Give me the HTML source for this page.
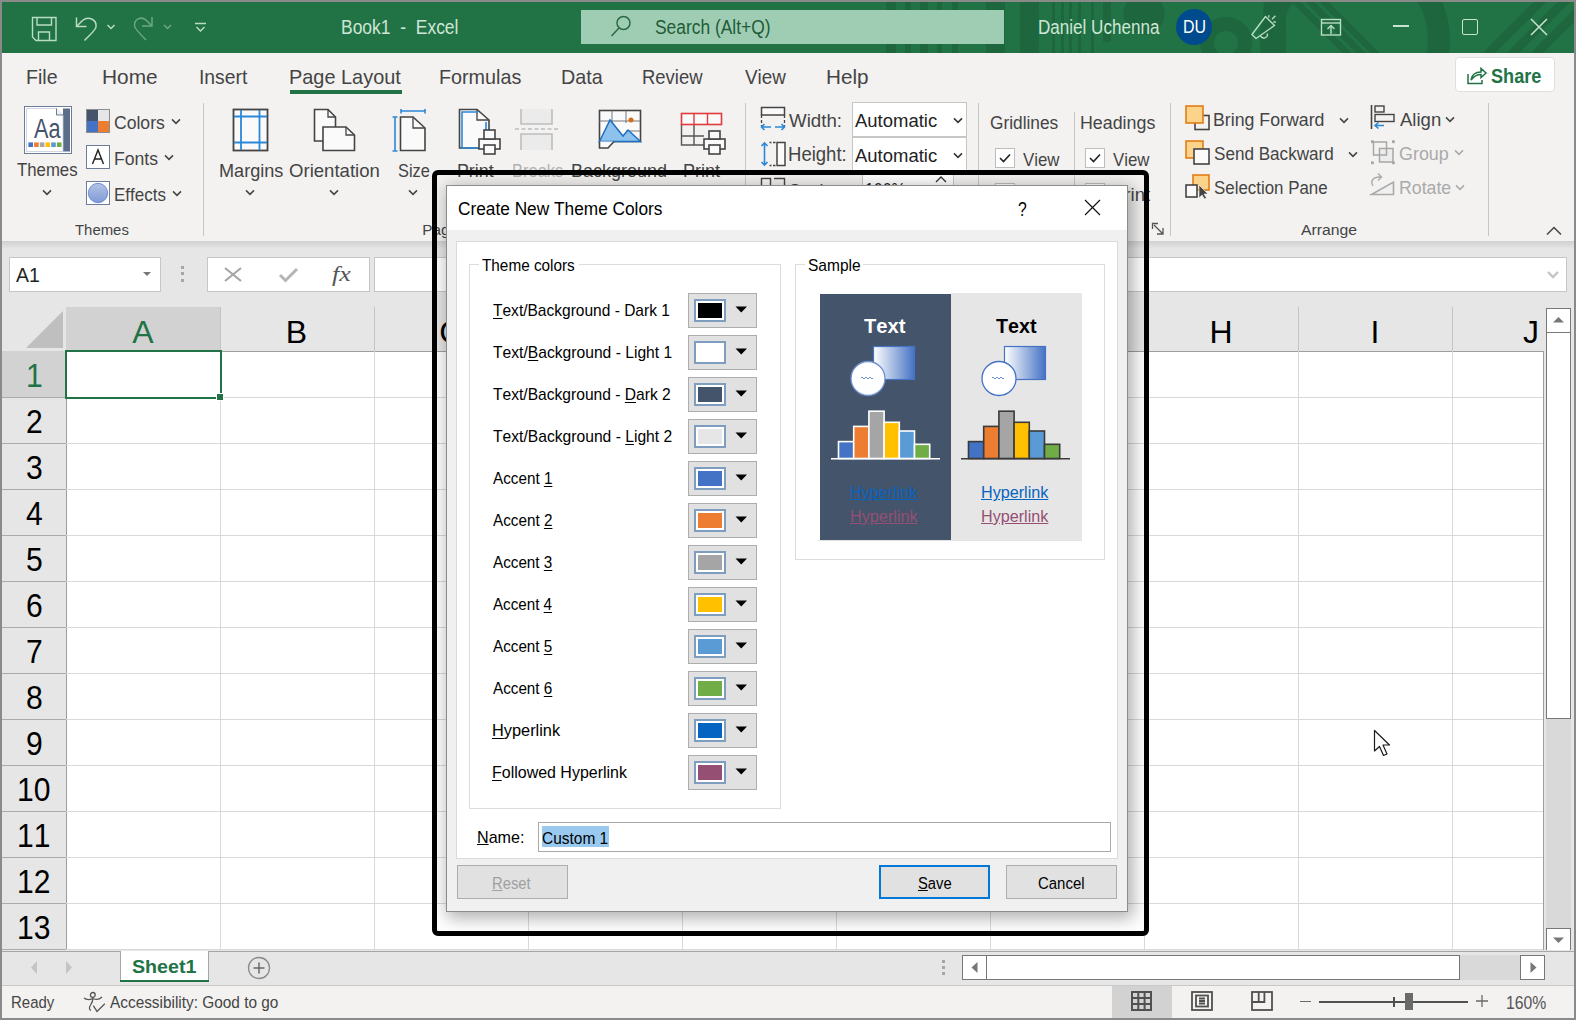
<!DOCTYPE html>
<html><head><meta charset="utf-8"><title>Excel</title>
<style>
html,body{margin:0;padding:0;width:1576px;height:1020px;overflow:hidden;}
body{position:relative;font-family:"Liberation Sans", sans-serif;font-kerning:none;}
.t{position:absolute;white-space:pre;font-kerning:none;}
svg{overflow:visible;}
</style></head><body>
<div style="position:absolute;left:0px;top:0px;width:1576px;height:1020px;background:#8a8a8a;"></div>
<div style="position:absolute;left:2px;top:2px;width:1572px;height:51px;background:#217346;"></div>
<svg style="position:absolute;left:2px;top:2px;" width="1572" height="51" viewBox="0 0 1572 51">
<defs><clipPath id="tbc"><rect x="0" y="0" width="1572" height="51"/></clipPath></defs>
<g clip-path="url(#tbc)">
<g fill="#1d663e">
<rect x="884" y="0" width="10" height="51"/><rect x="903" y="0" width="6" height="51"/><rect x="918" y="0" width="8" height="51"/>
<rect x="935" y="0" width="5" height="51"/><rect x="950" y="0" width="6" height="51"/><rect x="984" y="0" width="19" height="51"/>
<rect x="1018" y="0" width="19" height="51"/><rect x="1050" y="0" width="3" height="51"/><rect x="1059" y="0" width="3" height="51"/>
<rect x="1067" y="0" width="3" height="51"/><rect x="1076" y="0" width="3" height="51"/><rect x="1089" y="0" width="3" height="51"/>
<rect x="1101" y="0" width="8" height="40"/>
<circle cx="1142" cy="12" r="20.5"/>
</g>
<circle cx="1224" cy="41" r="19" fill="none" stroke="#1d663e" stroke-width="14"/>
<path d="M1262 0 H1284 V51 H1268 C1262 35 1260 15 1262 0 Z" fill="#1d663e"/>
<circle cx="1353" cy="38" r="84" fill="none" stroke="#1d663e" stroke-width="22"/>
<g stroke="#1d663e" stroke-width="9">
<line x1="1284" y1="-10" x2="1354" y2="60" stroke-width="6.5"/><line x1="1298" y1="-10" x2="1368" y2="60" stroke-width="6.5"/><line x1="1312" y1="-10" x2="1382" y2="60" stroke-width="6.5"/>
<line x1="1548" y1="-10" x2="1478" y2="60"/><line x1="1572" y1="-10" x2="1502" y2="60"/>
<line x1="1596" y1="-10" x2="1526" y2="60"/>
</g></g>
</svg>
<svg style="position:absolute;left:30px;top:15px;" width="30" height="30" viewBox="0 0 30 30"><g fill="none" stroke="#b9dcc4" stroke-width="1.4">
<path d="M2.5 2.5 H26 V25.5 H6 L2.5 22 Z"/><path d="M7 2.5 V10 H21.5 V2.5"/><path d="M8.5 25.5 V17 H19.5 V25.5"/></g></svg>
<svg style="position:absolute;left:72px;top:14px;" width="40" height="28" viewBox="0 0 40 28"><g fill="none" stroke="#b9dcc4" stroke-width="1.5">
<path d="M4.5 3.5 V12.5 H14.5"/><path d="M5 12 L10.5 6.5 C16 2 25 5 24 13 C23.5 16 20 19 12.5 26.5"/>
<path d="M35.5 11 L39 14.5 L42.5 11"/></g></svg>
<svg style="position:absolute;left:130px;top:14px;" width="40" height="28" viewBox="0 0 40 28"><g fill="none" stroke="#6ba983" stroke-width="1.5">
<path d="M22 3 V12 H12"/><path d="M21.5 11.5 L16 6 C11 2 4 5 4.5 12 C5 15 8 18 16 26"/>
<path d="M34 11 L37.5 14.5 L41 11"/></g></svg>
<svg style="position:absolute;left:194px;top:20px;" width="14" height="14" viewBox="0 0 14 14"><g fill="none" stroke="#b9dcc4" stroke-width="1.5"><path d="M1 3.5 H12"/><path d="M2.5 7 L6.5 11 L10.5 7"/></g></svg>
<div class="t" style="left:341.37px;top:16.87px;font-size:20.35px;line-height:20.35px;color:#cfe6d6;font-family:'Liberation Sans', sans-serif;transform:scaleX(0.8586);transform-origin:0 0;">Book1  -  Excel</div>
<div style="position:absolute;left:581px;top:10px;width:423px;height:34px;background:#9fcdb3;"></div>
<svg style="position:absolute;left:606px;top:14px;" width="30" height="26" viewBox="0 0 30 26"><g fill="none" stroke="#2a6a44" stroke-width="1.5"><circle cx="17.5" cy="9" r="6.5"/><path d="M13 14 L5.5 22"/></g></svg>
<div class="t" style="left:654.91px;top:17.54px;font-size:19.33px;line-height:19.33px;color:#1f5c38;font-family:'Liberation Sans', sans-serif;transform:scaleX(0.9002);transform-origin:0 0;">Search (Alt+Q)</div>
<div class="t" style="left:1037.60px;top:17.54px;font-size:19.33px;line-height:19.33px;color:#cfe6d6;font-family:'Liberation Sans', sans-serif;transform:scaleX(0.8825);transform-origin:0 0;">Daniel Uchenna</div>
<div style="position:absolute;left:1176px;top:9px;width:36px;height:36px;border-radius:50%;background:#004b8d"></div>
<div class="t" style="left:1182.69px;top:18.12px;font-size:18.17px;line-height:18.17px;color:#ffffff;font-family:'Liberation Sans', sans-serif;transform:scaleX(0.8780);transform-origin:0 0;">DU</div>
<svg style="position:absolute;left:1248px;top:12px;" width="34" height="30" viewBox="0 0 34 30"><g fill="none" stroke="#b9dcc4" stroke-width="1.4" stroke-linejoin="round">
<path d="M17.5 4.5 L26.5 13.5 L8 26.5 L4 22.5 Z"/><path d="M12.5 23.8 A3.6 3.6 0 0 0 19.3 21.5"/>
<path d="M20.8 3.3 V5.6"/><path d="M24 7.2 L27.4 3.8"/><path d="M25.3 10 H27.9"/></g></svg>
<svg style="position:absolute;left:1319px;top:17px;" width="26" height="22" viewBox="0 0 26 22"><g fill="none" stroke="#b9dcc4" stroke-width="1.4"><rect x="2.5" y="2.5" width="19" height="15.5"/><path d="M2.5 6 H21.5"/><path d="M12 17 V9 M8.5 12 L12 8.5 L15.5 12"/></g></svg>
<div style="position:absolute;left:1393px;top:25px;width:16px;height:1.5px;background:#c9e3d1;"></div>
<div style="position:absolute;left:1462px;top:19px;width:16px;height:16px;background:none;border:1.5px solid #c9e3d1;box-sizing:border-box;border-radius:2px;"></div>
<svg style="position:absolute;left:1529px;top:17px;" width="20" height="20" viewBox="0 0 20 20"><g stroke="#c9e3d1" stroke-width="1.5"><path d="M2 2 L18 18 M18 2 L2 18"/></g></svg>
<div style="position:absolute;left:2px;top:53px;width:1572px;height:188px;background:#f3f2f1;"></div>
<div class="t" style="left:26.29px;top:66.53px;font-size:20.64px;line-height:20.64px;color:#444444;font-family:'Liberation Sans', sans-serif;transform:scaleX(0.9495);transform-origin:0 0;">File</div>
<div class="t" style="left:102.29px;top:66.53px;font-size:20.64px;line-height:20.64px;color:#444444;font-family:'Liberation Sans', sans-serif;transform:scaleX(1.0106);transform-origin:0 0;">Home</div>
<div class="t" style="left:198.82px;top:66.53px;font-size:20.64px;line-height:20.64px;color:#444444;font-family:'Liberation Sans', sans-serif;transform:scaleX(0.9362);transform-origin:0 0;">Insert</div>
<div class="t" style="left:289.27px;top:66.53px;font-size:20.64px;line-height:20.64px;color:#444444;font-family:'Liberation Sans', sans-serif;transform:scaleX(0.9653);transform-origin:0 0;">Page Layout</div>
<div class="t" style="left:439.38px;top:66.53px;font-size:20.64px;line-height:20.64px;color:#444444;font-family:'Liberation Sans', sans-serif;transform:scaleX(0.9572);transform-origin:0 0;">Formulas</div>
<div class="t" style="left:560.88px;top:66.53px;font-size:20.64px;line-height:20.64px;color:#444444;font-family:'Liberation Sans', sans-serif;transform:scaleX(0.9570);transform-origin:0 0;">Data</div>
<div class="t" style="left:642.18px;top:66.53px;font-size:20.64px;line-height:20.64px;color:#444444;font-family:'Liberation Sans', sans-serif;transform:scaleX(0.8950);transform-origin:0 0;">Review</div>
<div class="t" style="left:744.92px;top:66.53px;font-size:20.64px;line-height:20.64px;color:#444444;font-family:'Liberation Sans', sans-serif;transform:scaleX(0.9128);transform-origin:0 0;">View</div>
<div class="t" style="left:826.30px;top:66.53px;font-size:20.64px;line-height:20.64px;color:#444444;font-family:'Liberation Sans', sans-serif;transform:scaleX(1.0028);transform-origin:0 0;">Help</div>
<div style="position:absolute;left:290px;top:90px;width:112px;height:4px;background:#217346;"></div>
<div style="position:absolute;left:1455px;top:57px;width:100px;height:35px;background:#ffffff;border:1px solid #e1dfdd;box-sizing:border-box;border-radius:4px;"></div>
<svg style="position:absolute;left:1464px;top:64px;" width="24" height="24" viewBox="0 0 24 24"><g fill="none" stroke="#217346" stroke-width="1.5"><path d="M4 10 V19.5 H18 V16"/><path d="M7 16 C8 10 12 8 17 8 V4.5 L22 9 L17 13.5 V10.5 C13 10.5 10 12 7 16 Z"/></g></svg>
<div class="t" style="left:1491.28px;top:67.39px;font-size:19.62px;line-height:19.62px;color:#217346;font-family:'Liberation Sans', sans-serif;font-weight:bold;transform:scaleX(0.9231);transform-origin:0 0;">Share</div>
<div style="position:absolute;left:2px;top:241px;width:1572px;height:8px;background:linear-gradient(#d0d0d0,#e6e6e6);"></div>
<div style="position:absolute;left:2px;top:249px;width:1572px;height:58px;background:#e6e6e6;"></div>
<div style="position:absolute;left:9px;top:257px;width:152px;height:35px;background:#ffffff;border:1px solid #c6c6c6;box-sizing:border-box;"></div>
<div class="t" style="left:16.16px;top:266.39px;font-size:19.62px;line-height:19.62px;color:#222222;font-family:'Liberation Sans', sans-serif;transform:scaleX(0.9911);transform-origin:0 0;">A1</div>
<svg style="position:absolute;left:140px;top:270px;" width="14" height="8" viewBox="0 0 14 8"><path d="M3 2 H11 L7 6 Z" fill="#777"/></svg>
<div style="position:absolute;left:181px;top:266px;width:3px;height:3px;background:#a6a6a6;"></div>
<div style="position:absolute;left:181px;top:272px;width:3px;height:3px;background:#a6a6a6;"></div>
<div style="position:absolute;left:181px;top:279px;width:3px;height:3px;background:#a6a6a6;"></div>
<div style="position:absolute;left:207px;top:257px;width:163px;height:35px;background:#ffffff;border:1px solid #c6c6c6;box-sizing:border-box;"></div>
<svg style="position:absolute;left:222px;top:265px;" width="24" height="20" viewBox="0 0 24 20"><g stroke="#a6a6a6" stroke-width="2.2"><path d="M3 3 L19 16 M19 3 L3 16"/></g></svg>
<svg style="position:absolute;left:276px;top:265px;" width="26" height="20" viewBox="0 0 26 20"><path d="M4 10 L9.5 15.5 L21 4" fill="none" stroke="#b5b5b5" stroke-width="3"/></svg>
<div class="t" style="left:332.11px;top:263.54px;font-size:21.80px;line-height:21.80px;color:#555555;font-family:'Liberation Serif', serif;font-style:italic;transform:scaleX(1.1872);transform-origin:0 0;font-style:italic;">fx</div>
<div style="position:absolute;left:374px;top:257px;width:1193px;height:35px;background:#ffffff;border:1px solid #c6c6c6;box-sizing:border-box;"></div>
<svg style="position:absolute;left:1546px;top:270px;" width="14" height="10" viewBox="0 0 14 10"><path d="M2 2 L7 7 L12 2" fill="none" stroke="#c4c4c4" stroke-width="2.4"/></svg>
<div style="position:absolute;left:2px;top:307px;width:1572px;height:644px;background:#e6e6e6;"></div>
<div style="position:absolute;left:67px;top:351px;width:1477px;height:600px;background:#ffffff;"></div>
<svg style="position:absolute;left:26px;top:311px;" width="38" height="38" viewBox="0 0 38 38"><path d="M37 0 V37 H0 Z" fill="#bfbfbf"/></svg>
<div style="position:absolute;left:66px;top:307px;width:154px;height:44px;background:#d2d2d2;"></div>
<div style="position:absolute;left:220px;top:307px;width:1px;height:44px;background:#c4c4c4;"></div>
<div style="position:absolute;left:374px;top:307px;width:1px;height:44px;background:#c4c4c4;"></div>
<div style="position:absolute;left:528px;top:307px;width:1px;height:44px;background:#c4c4c4;"></div>
<div style="position:absolute;left:682px;top:307px;width:1px;height:44px;background:#c4c4c4;"></div>
<div style="position:absolute;left:836px;top:307px;width:1px;height:44px;background:#c4c4c4;"></div>
<div style="position:absolute;left:990px;top:307px;width:1px;height:44px;background:#c4c4c4;"></div>
<div style="position:absolute;left:1144px;top:307px;width:1px;height:44px;background:#c4c4c4;"></div>
<div style="position:absolute;left:1298px;top:307px;width:1px;height:44px;background:#c4c4c4;"></div>
<div style="position:absolute;left:1452px;top:307px;width:1px;height:44px;background:#c4c4c4;"></div>
<div style="position:absolute;left:66px;top:351px;width:1478px;height:1px;background:#9e9e9e;"></div>
<div style="position:absolute;left:2px;top:351px;width:64px;height:47px;background:#d2d2d2;"></div>
<div style="position:absolute;left:66px;top:351px;width:1px;height:600px;background:#9e9e9e;"></div>
<div style="position:absolute;left:2px;top:397px;width:64px;height:1px;background:#ababab;"></div>
<div style="position:absolute;left:66px;top:397px;width:1478px;height:1px;background:#d9d9d9;"></div>
<div style="position:absolute;left:2px;top:443px;width:64px;height:1px;background:#ababab;"></div>
<div style="position:absolute;left:66px;top:443px;width:1478px;height:1px;background:#d9d9d9;"></div>
<div style="position:absolute;left:2px;top:489px;width:64px;height:1px;background:#ababab;"></div>
<div style="position:absolute;left:66px;top:489px;width:1478px;height:1px;background:#d9d9d9;"></div>
<div style="position:absolute;left:2px;top:535px;width:64px;height:1px;background:#ababab;"></div>
<div style="position:absolute;left:66px;top:535px;width:1478px;height:1px;background:#d9d9d9;"></div>
<div style="position:absolute;left:2px;top:581px;width:64px;height:1px;background:#ababab;"></div>
<div style="position:absolute;left:66px;top:581px;width:1478px;height:1px;background:#d9d9d9;"></div>
<div style="position:absolute;left:2px;top:627px;width:64px;height:1px;background:#ababab;"></div>
<div style="position:absolute;left:66px;top:627px;width:1478px;height:1px;background:#d9d9d9;"></div>
<div style="position:absolute;left:2px;top:673px;width:64px;height:1px;background:#ababab;"></div>
<div style="position:absolute;left:66px;top:673px;width:1478px;height:1px;background:#d9d9d9;"></div>
<div style="position:absolute;left:2px;top:719px;width:64px;height:1px;background:#ababab;"></div>
<div style="position:absolute;left:66px;top:719px;width:1478px;height:1px;background:#d9d9d9;"></div>
<div style="position:absolute;left:2px;top:765px;width:64px;height:1px;background:#ababab;"></div>
<div style="position:absolute;left:66px;top:765px;width:1478px;height:1px;background:#d9d9d9;"></div>
<div style="position:absolute;left:2px;top:811px;width:64px;height:1px;background:#ababab;"></div>
<div style="position:absolute;left:66px;top:811px;width:1478px;height:1px;background:#d9d9d9;"></div>
<div style="position:absolute;left:2px;top:857px;width:64px;height:1px;background:#ababab;"></div>
<div style="position:absolute;left:66px;top:857px;width:1478px;height:1px;background:#d9d9d9;"></div>
<div style="position:absolute;left:2px;top:903px;width:64px;height:1px;background:#ababab;"></div>
<div style="position:absolute;left:66px;top:903px;width:1478px;height:1px;background:#d9d9d9;"></div>
<div style="position:absolute;left:2px;top:949px;width:64px;height:1px;background:#ababab;"></div>
<div style="position:absolute;left:66px;top:949px;width:1478px;height:1px;background:#d9d9d9;"></div>
<div style="position:absolute;left:220px;top:351px;width:1px;height:600px;background:#d9d9d9;"></div>
<div style="position:absolute;left:374px;top:351px;width:1px;height:600px;background:#d9d9d9;"></div>
<div style="position:absolute;left:528px;top:351px;width:1px;height:600px;background:#d9d9d9;"></div>
<div style="position:absolute;left:682px;top:351px;width:1px;height:600px;background:#d9d9d9;"></div>
<div style="position:absolute;left:836px;top:351px;width:1px;height:600px;background:#d9d9d9;"></div>
<div style="position:absolute;left:990px;top:351px;width:1px;height:600px;background:#d9d9d9;"></div>
<div style="position:absolute;left:1144px;top:351px;width:1px;height:600px;background:#d9d9d9;"></div>
<div style="position:absolute;left:1298px;top:351px;width:1px;height:600px;background:#d9d9d9;"></div>
<div style="position:absolute;left:1452px;top:351px;width:1px;height:600px;background:#d9d9d9;"></div>
<div style="position:absolute;left:1543px;top:351px;width:1px;height:600px;background:#9e9e9e;"></div>
<div class="t" style="left:132.34px;top:316.43px;font-size:31.98px;line-height:31.98px;color:#217346;font-family:'Liberation Sans', sans-serif;">A</div>
<div class="t" style="left:285.87px;top:316.43px;font-size:31.98px;line-height:31.98px;color:#000000;font-family:'Liberation Sans', sans-serif;">B</div>
<div class="t" style="left:439.25px;top:316.43px;font-size:31.98px;line-height:31.98px;color:#000000;font-family:'Liberation Sans', sans-serif;">C</div>
<div class="t" style="left:592.91px;top:316.43px;font-size:31.98px;line-height:31.98px;color:#000000;font-family:'Liberation Sans', sans-serif;">D</div>
<div class="t" style="left:747.71px;top:316.43px;font-size:31.98px;line-height:31.98px;color:#000000;font-family:'Liberation Sans', sans-serif;">E</div>
<div class="t" style="left:902.56px;top:316.43px;font-size:31.98px;line-height:31.98px;color:#000000;font-family:'Liberation Sans', sans-serif;">F</div>
<div class="t" style="left:1054.95px;top:316.43px;font-size:31.98px;line-height:31.98px;color:#000000;font-family:'Liberation Sans', sans-serif;">G</div>
<div class="t" style="left:1209.45px;top:316.43px;font-size:31.98px;line-height:31.98px;color:#000000;font-family:'Liberation Sans', sans-serif;">H</div>
<div class="t" style="left:1370.56px;top:316.43px;font-size:31.98px;line-height:31.98px;color:#000000;font-family:'Liberation Sans', sans-serif;">I</div>
<div class="t" style="left:1522.90px;top:316.43px;font-size:31.98px;line-height:31.98px;color:#000000;font-family:'Liberation Sans', sans-serif;">J</div>
<div class="t" style="left:25.72px;top:360.32px;font-size:32.70px;line-height:32.70px;color:#217346;font-family:'Liberation Sans', sans-serif;transform:scaleX(0.9200);transform-origin:0 0;">1</div>
<div class="t" style="left:26.13px;top:406.32px;font-size:32.70px;line-height:32.70px;color:#000000;font-family:'Liberation Sans', sans-serif;transform:scaleX(0.9200);transform-origin:0 0;">2</div>
<div class="t" style="left:26.22px;top:452.32px;font-size:32.70px;line-height:32.70px;color:#000000;font-family:'Liberation Sans', sans-serif;transform:scaleX(0.9200);transform-origin:0 0;">3</div>
<div class="t" style="left:26.23px;top:498.32px;font-size:32.70px;line-height:32.70px;color:#000000;font-family:'Liberation Sans', sans-serif;transform:scaleX(0.9200);transform-origin:0 0;">4</div>
<div class="t" style="left:26.16px;top:544.32px;font-size:32.70px;line-height:32.70px;color:#000000;font-family:'Liberation Sans', sans-serif;transform:scaleX(0.9200);transform-origin:0 0;">5</div>
<div class="t" style="left:26.03px;top:590.32px;font-size:32.70px;line-height:32.70px;color:#000000;font-family:'Liberation Sans', sans-serif;transform:scaleX(0.9200);transform-origin:0 0;">6</div>
<div class="t" style="left:26.12px;top:636.32px;font-size:32.70px;line-height:32.70px;color:#000000;font-family:'Liberation Sans', sans-serif;transform:scaleX(0.9200);transform-origin:0 0;">7</div>
<div class="t" style="left:26.13px;top:682.32px;font-size:32.70px;line-height:32.70px;color:#000000;font-family:'Liberation Sans', sans-serif;transform:scaleX(0.9200);transform-origin:0 0;">8</div>
<div class="t" style="left:26.14px;top:728.32px;font-size:32.70px;line-height:32.70px;color:#000000;font-family:'Liberation Sans', sans-serif;transform:scaleX(0.9200);transform-origin:0 0;">9</div>
<div class="t" style="left:17.21px;top:774.32px;font-size:32.70px;line-height:32.70px;color:#000000;font-family:'Liberation Sans', sans-serif;transform:scaleX(0.9200);transform-origin:0 0;">10</div>
<div class="t" style="left:17.36px;top:820.32px;font-size:32.70px;line-height:32.70px;color:#000000;font-family:'Liberation Sans', sans-serif;transform:scaleX(0.9200);transform-origin:0 0;">11</div>
<div class="t" style="left:17.38px;top:866.32px;font-size:32.70px;line-height:32.70px;color:#000000;font-family:'Liberation Sans', sans-serif;transform:scaleX(0.9200);transform-origin:0 0;">12</div>
<div class="t" style="left:17.28px;top:912.32px;font-size:32.70px;line-height:32.70px;color:#000000;font-family:'Liberation Sans', sans-serif;transform:scaleX(0.9200);transform-origin:0 0;">13</div>
<div style="position:absolute;left:65px;top:350px;width:157px;height:49px;background:none;border:2px solid #217346;box-sizing:border-box;"></div>
<div style="position:absolute;left:216px;top:393px;width:8px;height:8px;background:#217346;border:1px solid #ffffff;box-sizing:border-box;"></div>
<div style="position:absolute;left:1546px;top:308px;width:25px;height:25px;background:#ffffff;border:1.5px solid #777777;box-sizing:border-box;"></div>
<svg style="position:absolute;left:1552px;top:316px;" width="13" height="8" viewBox="0 0 13 8"><path d="M1 6.5 L6.5 1 L12 6.5 Z" fill="#777"/></svg>
<div style="position:absolute;left:1546px;top:332px;width:25px;height:387px;background:#ffffff;border:1.5px solid #777777;box-sizing:border-box;"></div>
<div style="position:absolute;left:1546px;top:719px;width:25px;height:209px;background:#d9d9d9;"></div>
<div style="position:absolute;left:1546px;top:928px;width:25px;height:25px;background:#ffffff;border:1.5px solid #777777;box-sizing:border-box;"></div>
<svg style="position:absolute;left:1552px;top:936px;" width="13" height="8" viewBox="0 0 13 8"><path d="M1 1.5 L6.5 7 L12 1.5 Z" fill="#777"/></svg>
<div style="position:absolute;left:2px;top:950px;width:1572px;height:1px;background:#e6e6e6;"></div>
<div style="position:absolute;left:2px;top:951px;width:1572px;height:1px;background:#a6a6a6;"></div>
<div style="position:absolute;left:2px;top:952px;width:1572px;height:33px;background:#e6e6e6;"></div>
<svg style="position:absolute;left:26px;top:958px;" width="50" height="20" viewBox="0 0 50 20"><path d="M11 3 L5 9.5 L11 16 Z" fill="#c4c4c4"/><path d="M40 3 L46 9.5 L40 16 Z" fill="#c4c4c4"/></svg>
<div style="position:absolute;left:120px;top:951px;width:89px;height:31px;background:#ffffff;border:1px solid #a6a6a6;box-sizing:border-box;border-top:none;"></div>
<div style="position:absolute;left:120px;top:980px;width:89px;height:2px;background:#217346;"></div>
<div class="t" style="left:131.73px;top:958.15px;font-size:18.60px;line-height:18.60px;color:#217346;font-family:'Liberation Sans', sans-serif;font-weight:bold;transform:scaleX(1.0574);transform-origin:0 0;">Sheet1</div>
<svg style="position:absolute;left:247px;top:956px;" width="24" height="24" viewBox="0 0 24 24"><circle cx="12" cy="12" r="10.5" fill="none" stroke="#8a8a8a" stroke-width="1.3"/><path d="M12 6.5 V17.5 M6.5 12 H17.5" stroke="#6a6a6a" stroke-width="1.5"/></svg>
<div style="position:absolute;left:942px;top:960px;width:3px;height:3px;background:#a6a6a6;"></div>
<div style="position:absolute;left:942px;top:966px;width:3px;height:3px;background:#a6a6a6;"></div>
<div style="position:absolute;left:942px;top:972px;width:3px;height:3px;background:#a6a6a6;"></div>
<div style="position:absolute;left:962px;top:955px;width:25px;height:25px;background:#ffffff;border:1.5px solid #777777;box-sizing:border-box;"></div>
<svg style="position:absolute;left:968px;top:960px;" width="14" height="14" viewBox="0 0 14 14"><path d="M9.5 2 L3.5 7.5 L9.5 13 Z" fill="#777"/></svg>
<div style="position:absolute;left:986px;top:955px;width:474px;height:25px;background:#ffffff;border:1.5px solid #777777;box-sizing:border-box;"></div>
<div style="position:absolute;left:1460px;top:955px;width:60px;height:25px;background:#d9d9d9;"></div>
<div style="position:absolute;left:1520px;top:955px;width:25px;height:25px;background:#ffffff;border:1.5px solid #777777;box-sizing:border-box;"></div>
<svg style="position:absolute;left:1526px;top:960px;" width="14" height="14" viewBox="0 0 14 14"><path d="M4.5 2 L10.5 7.5 L4.5 13 Z" fill="#777"/></svg>
<div style="position:absolute;left:2px;top:985px;width:1572px;height:1px;background:#c8c8c8;"></div>
<div style="position:absolute;left:2px;top:986px;width:1572px;height:32px;background:#f3f2f1;"></div>
<div class="t" style="left:11.07px;top:995.33px;font-size:16.86px;line-height:16.86px;color:#444444;font-family:'Liberation Sans', sans-serif;transform:scaleX(0.8876);transform-origin:0 0;">Ready</div>
<svg style="position:absolute;left:82px;top:990px;" width="26" height="24" viewBox="0 0 26 24"><g fill="none" stroke="#555" stroke-width="1.3"><circle cx="10.8" cy="4.9" r="2.4"/><path d="M2 8 C5 10.5 8 9.8 10.8 8.5 C13.5 9.8 17 10 20 7"/><path d="M10.8 8.5 C11 12 9 14 8 16 C7 18 7.5 20 9 20.5"/><path d="M11.3 15.7 L15 21.4 L22.8 13.8"/></g></svg>
<div class="t" style="left:109.97px;top:995.33px;font-size:16.86px;line-height:16.86px;color:#444444;font-family:'Liberation Sans', sans-serif;transform:scaleX(0.9120);transform-origin:0 0;">Accessibility: Good to go</div>
<div style="position:absolute;left:1112px;top:986px;width:60px;height:32px;background:#d2d2d2;"></div>
<svg style="position:absolute;left:1130px;top:990px;" width="24" height="24" viewBox="0 0 24 24"><g fill="none" stroke="#505050" stroke-width="2"><rect x="2" y="2" width="19" height="18"/><path d="M8.3 2 V20 M14.6 2 V20 M2 8 H21 M2 14 H21"/></g></svg>
<svg style="position:absolute;left:1190px;top:990px;" width="24" height="24" viewBox="0 0 24 24"><g fill="none" stroke="#505050" stroke-width="1.8"><rect x="2" y="2" width="20" height="18"/><rect x="6" y="5.5" width="12" height="11"/><path d="M9 8.5 H15 M9 11 H15 M9 13.5 H15"/></g></svg>
<svg style="position:absolute;left:1250px;top:990px;" width="24" height="24" viewBox="0 0 24 24"><g fill="none" stroke="#505050" stroke-width="1.8"><rect x="2" y="2" width="20" height="18"/><path d="M2 12 H14.4 V2 M8.7 2 V12"/></g></svg>
<div style="position:absolute;left:1300px;top:1001px;width:11px;height:1.3px;background:#6a6a6a;"></div>
<div style="position:absolute;left:1319px;top:1001px;width:149px;height:2px;background:#505050;"></div>
<div style="position:absolute;left:1393px;top:997px;width:2px;height:10px;background:#505050;"></div>
<div style="position:absolute;left:1405px;top:993px;width:8px;height:17px;background:#6a6a6a;"></div>
<svg style="position:absolute;left:1474px;top:993px;" width="16" height="16" viewBox="0 0 16 16"><path d="M8 2 V14 M2 8 H14" stroke="#6a6a6a" stroke-width="1.3"/></svg>
<div class="t" style="left:1505.80px;top:994.99px;font-size:17.73px;line-height:17.73px;color:#555555;font-family:'Liberation Sans', sans-serif;transform:scaleX(0.8900);transform-origin:0 0;">160%</div>
<svg style="position:absolute;left:24px;top:106px;" width="49" height="49" viewBox="0 0 49 49">
<rect x="0.5" y="0.5" width="47" height="47" fill="#ffffff" stroke="#6d7c99" stroke-width="1"/>
<rect x="39" y="2.5" width="7" height="43" fill="#5c6d8a"/>
<path d="M2.5 2.5 H32.5 L39 9 V45.5 H2.5 Z" fill="#ffffff" stroke="#c5ccd8" stroke-width="0.8"/>
<path d="M32.5 2.5 V9 H39" fill="#eef0f4" stroke="#5c6d8a" stroke-width="0.9"/>
<rect x="4.4" y="36.4" width="4.6" height="4.6" fill="#4472c4"/><rect x="10.1" y="36.4" width="4.6" height="4.6" fill="#ed7d31"/>
<rect x="15.8" y="36.4" width="4.6" height="4.6" fill="#a5a5a5"/><rect x="21.5" y="36.4" width="4.6" height="4.6" fill="#ffc000"/>
<rect x="27.2" y="36.4" width="4.6" height="4.6" fill="#5b9bd5"/><rect x="32.9" y="36.4" width="4.6" height="4.6" fill="#70ad47"/>
</svg>
<div class="t" style="left:33.76px;top:115.12px;font-size:27.62px;line-height:27.62px;color:#44546a;font-family:'Liberation Sans', sans-serif;transform:scaleX(0.7858);transform-origin:0 0;">Aa</div>
<div class="t" style="left:17.02px;top:160.71px;font-size:18.90px;line-height:18.90px;color:#444444;font-family:'Liberation Sans', sans-serif;transform:scaleX(0.8876);transform-origin:0 0;">Themes</div>
<svg style="position:absolute;left:41.0px;top:186.0px;" width="12" height="12" viewBox="0 0 12 12"><path d="M2 4.4 L6.0 8.4 L10 4.4" fill="none" stroke="#444444" stroke-width="1.5"/></svg>
<svg style="position:absolute;left:86px;top:109px;" width="25" height="25" viewBox="0 0 25 25"><rect x="0.5" y="0.5" width="23" height="23" fill="none" stroke="#8d8d8d"/>
<rect x="1" y="1" width="11" height="11" fill="#44546a"/><rect x="12" y="1" width="11" height="11" fill="#e7e6e6"/>
<rect x="1" y="12" width="11" height="11" fill="#4472c4"/><rect x="12" y="12" width="11" height="11" fill="#ed7d31"/></svg>
<div class="t" style="left:113.81px;top:114.07px;font-size:18.46px;line-height:18.46px;color:#444444;font-family:'Liberation Sans', sans-serif;transform:scaleX(0.9529);transform-origin:0 0;">Colors</div>
<svg style="position:absolute;left:169.5px;top:115.0px;" width="12" height="12" viewBox="0 0 12 12"><path d="M2 4.4 L6.0 8.4 L10 4.4" fill="none" stroke="#444444" stroke-width="1.5"/></svg>
<svg style="position:absolute;left:86px;top:145px;" width="25" height="25" viewBox="0 0 25 25"><rect x="0.5" y="0.5" width="23" height="23" fill="#ffffff" stroke="#6d7c99"/>
<path d="M6.5 19 L12 5 L17.5 19 M8.5 14 H15.5" fill="none" stroke="#222" stroke-width="1.4"/></svg>
<div class="t" style="left:113.55px;top:150.07px;font-size:18.46px;line-height:18.46px;color:#444444;font-family:'Liberation Sans', sans-serif;transform:scaleX(0.9549);transform-origin:0 0;">Fonts</div>
<svg style="position:absolute;left:162.5px;top:151.0px;" width="12" height="12" viewBox="0 0 12 12"><path d="M2 4.4 L6.0 8.4 L10 4.4" fill="none" stroke="#444444" stroke-width="1.5"/></svg>
<svg style="position:absolute;left:86px;top:181px;" width="25" height="25" viewBox="0 0 25 25"><defs><linearGradient id="eg" x1="0" y1="0" x2="0" y2="1"><stop offset="0" stop-color="#b4c3e6"/><stop offset="1" stop-color="#7f9ad6"/></linearGradient></defs>
<rect x="0.5" y="0.5" width="23" height="23" fill="#ffffff" stroke="#6d7c99"/>
<circle cx="12" cy="12" r="9.7" fill="url(#eg)" stroke="#5b7cc9" stroke-width="0.8"/></svg>
<div class="t" style="left:113.60px;top:186.07px;font-size:18.46px;line-height:18.46px;color:#444444;font-family:'Liberation Sans', sans-serif;transform:scaleX(0.9218);transform-origin:0 0;">Effects</div>
<svg style="position:absolute;left:171.0px;top:187.0px;" width="12" height="12" viewBox="0 0 12 12"><path d="M2 4.4 L6.0 8.4 L10 4.4" fill="none" stroke="#444444" stroke-width="1.5"/></svg>
<div class="t" style="left:74.67px;top:221.88px;font-size:15.26px;line-height:15.26px;color:#444444;font-family:'Liberation Sans', sans-serif;transform:scaleX(0.9772);transform-origin:0 0;">Themes</div>
<div style="position:absolute;left:203px;top:103px;width:1px;height:133px;background:#c8c6c4;"></div>
<svg style="position:absolute;left:232px;top:108px;" width="38" height="45" viewBox="0 0 38 45"><rect x="1.5" y="1.5" width="34" height="41" fill="#fafafa" stroke="#444" stroke-width="1.8"/>
<path d="M9 2 V42 M27.5 2 V42 M2 8.5 H35 M2 34.5 H35" stroke="#2b88d8" stroke-width="1.8"/></svg>
<div class="t" style="left:218.51px;top:161.62px;font-size:18.17px;line-height:18.17px;color:#444444;font-family:'Liberation Sans', sans-serif;transform:scaleX(0.9972);transform-origin:0 0;">Margins</div>
<svg style="position:absolute;left:244.0px;top:186.0px;" width="12" height="12" viewBox="0 0 12 12"><path d="M2 4.4 L6.0 8.4 L10 4.4" fill="none" stroke="#444444" stroke-width="1.5"/></svg>
<svg style="position:absolute;left:313px;top:108px;" width="45" height="45" viewBox="0 0 45 45"><path d="M1.5 1.5 H15 L22.5 9 V33 H1.5 Z" fill="#fafafa" stroke="#444" stroke-width="1.6"/>
<path d="M15 1.5 V9 H22.5" fill="none" stroke="#444" stroke-width="1.3"/>
<path d="M10 19 H33 L41.5 27 V42.5 H10 Z" fill="#fafafa" stroke="#444" stroke-width="1.6"/>
<path d="M33 19 V27 H41.5" fill="none" stroke="#444" stroke-width="1.3"/></svg>
<div class="t" style="left:289.12px;top:161.62px;font-size:18.17px;line-height:18.17px;color:#444444;font-family:'Liberation Sans', sans-serif;transform:scaleX(1.0227);transform-origin:0 0;">Orientation</div>
<svg style="position:absolute;left:328.0px;top:186.0px;" width="12" height="12" viewBox="0 0 12 12"><path d="M2 4.4 L6.0 8.4 L10 4.4" fill="none" stroke="#444444" stroke-width="1.5"/></svg>
<svg style="position:absolute;left:392px;top:108px;" width="36" height="45" viewBox="0 0 36 45"><path d="M8.5 9 H21 L33 20 V42.5 H8.5 Z" fill="#fafafa" stroke="#444" stroke-width="1.6"/>
<path d="M21 9 V20 H33" fill="none" stroke="#444" stroke-width="1.3"/>
<path d="M3 9 V43 M0.5 9 H5.5 M0.5 43 H5.5 M9 3 H33 M9 1 V5.5 M33 1 V5.5" stroke="#2b88d8" stroke-width="1.6"/></svg>
<div class="t" style="left:397.86px;top:161.62px;font-size:18.17px;line-height:18.17px;color:#444444;font-family:'Liberation Sans', sans-serif;transform:scaleX(0.9018);transform-origin:0 0;">Size</div>
<svg style="position:absolute;left:407.0px;top:186.0px;" width="12" height="12" viewBox="0 0 12 12"><path d="M2 4.4 L6.0 8.4 L10 4.4" fill="none" stroke="#444444" stroke-width="1.5"/></svg>
<svg style="position:absolute;left:458px;top:108px;" width="44" height="48" viewBox="0 0 44 48"><path d="M1.5 1.5 H19 L31 12 V40 H1.5 Z" fill="#fafafa" stroke="#444" stroke-width="1.6"/>
<path d="M19 1.5 V12 H31" fill="none" stroke="#444" stroke-width="1.3"/>
<path d="M28 14 V40 H4 V4 H20" fill="none" stroke="#2b88d8" stroke-width="1.6"/>
<rect x="21" y="31" width="21" height="10" fill="#fafafa" stroke="#444" stroke-width="1.6"/>
<rect x="26" y="22" width="11" height="9" fill="#fafafa" stroke="#444" stroke-width="1.6"/>
<rect x="26" y="37" width="11" height="9" fill="#fafafa" stroke="#444" stroke-width="1.6"/></svg>
<div class="t" style="left:457.44px;top:161.62px;font-size:18.17px;line-height:18.17px;color:#444444;font-family:'Liberation Sans', sans-serif;transform:scaleX(0.9795);transform-origin:0 0;">Print</div>
<svg style="position:absolute;left:514px;top:108px;" width="46" height="44" viewBox="0 0 46 44"><path d="M7 1 V16 H38 V1" fill="#ebebeb" stroke="#bdbdbd" stroke-width="1.6"/>
<path d="M7 42 V26 H38 V42" fill="#ebebeb" stroke="#bdbdbd" stroke-width="1.6"/>
<path d="M1 21 H45" stroke="#bdbdbd" stroke-width="1.5" stroke-dasharray="4 2.5"/></svg>
<div class="t" style="left:511.65px;top:161.62px;font-size:18.17px;line-height:18.17px;color:#b1b1b1;font-family:'Liberation Sans', sans-serif;transform:scaleX(0.9081);transform-origin:0 0;">Breaks</div>
<svg style="position:absolute;left:598px;top:109px;" width="45" height="42" viewBox="0 0 45 42"><rect x="1.5" y="1.5" width="41" height="31" fill="#fafafa" stroke="#444" stroke-width="1.6"/>
<path d="M14 1.5 V20 M28 1.5 V14 M1.5 12 H42 M28 22 H42" stroke="#777" stroke-width="1"/>
<path d="M1.5 32.5 L12 11 L25 27 L30 21 L42.5 32.5 Z" fill="#8cc2ec" stroke="#1f6fc0" stroke-width="1.5"/>
<circle cx="33" cy="11" r="2.5" fill="#d86b14"/>
<path d="M1.5 32.5 V39 H10 L16 32.5" fill="#fafafa" stroke="#444" stroke-width="1.6"/></svg>
<div class="t" style="left:571.12px;top:161.62px;font-size:18.17px;line-height:18.17px;color:#444444;font-family:'Liberation Sans', sans-serif;transform:scaleX(0.9904);transform-origin:0 0;">Background</div>
<svg style="position:absolute;left:680px;top:112px;" width="48" height="44" viewBox="0 0 48 44"><path d="M1.5 12 V24 H24 M1.5 12 V33 H24 M14 12 V33" fill="none" stroke="#555" stroke-width="1.4"/>
<rect x="1.5" y="1.5" width="40" height="11" fill="#fafafa" stroke="#e0393e" stroke-width="1.6"/>
<path d="M14 1.5 V12 M27.5 1.5 V12" stroke="#e0393e" stroke-width="1.4"/>
<rect x="24" y="27" width="21" height="10" fill="#fafafa" stroke="#444" stroke-width="1.6"/>
<rect x="29" y="19" width="11" height="8" fill="#fafafa" stroke="#444" stroke-width="1.6"/>
<rect x="29" y="33" width="11" height="9" fill="#fafafa" stroke="#444" stroke-width="1.6"/></svg>
<div class="t" style="left:683.32px;top:161.62px;font-size:18.17px;line-height:18.17px;color:#444444;font-family:'Liberation Sans', sans-serif;transform:scaleX(0.9935);transform-origin:0 0;">Print</div>
<div style="position:absolute;left:745px;top:103px;width:1px;height:133px;background:#c8c6c4;"></div>
<svg style="position:absolute;left:760px;top:106px;" width="28" height="28" viewBox="0 0 28 28"><rect x="1.5" y="1.5" width="23" height="7.5" fill="#fafafa" stroke="#444" stroke-width="1.5"/>
<path d="M1.5 9 V20 M24.5 9 V20" stroke="#444" stroke-width="1.3" stroke-dasharray="3 2"/>
<path d="M2 21 H11 M4.5 18 L1.5 21 L4.5 24 M15 21 H24.5 M21.5 18 L24.5 21 L21.5 24" fill="none" stroke="#2b88d8" stroke-width="1.6"/></svg>
<div class="t" style="left:789.32px;top:110.96px;font-size:19.19px;line-height:19.19px;color:#444444;font-family:'Liberation Sans', sans-serif;transform:scaleX(0.9746);transform-origin:0 0;">Width:</div>
<div style="position:absolute;left:852px;top:102px;width:115px;height:35px;background:#ffffff;border:1px solid #c8c6c4;box-sizing:border-box;"></div>
<div class="t" style="left:855.26px;top:112.01px;font-size:18.90px;line-height:18.90px;color:#222222;font-family:'Liberation Sans', sans-serif;transform:scaleX(0.9787);transform-origin:0 0;">Automatic</div>
<svg style="position:absolute;left:952.0px;top:114.0px;" width="12" height="12" viewBox="0 0 12 12"><path d="M2 4.4 L6.0 8.4 L10 4.4" fill="none" stroke="#333" stroke-width="1.5"/></svg>
<svg style="position:absolute;left:760px;top:141px;" width="28" height="28" viewBox="0 0 28 28"><rect x="17" y="1.5" width="8" height="23" fill="#fafafa" stroke="#444" stroke-width="1.5"/>
<path d="M9.5 1.5 H11.5 M13 1.5 H15.5 M9.5 24.5 H11.5 M13 24.5 H15.5" stroke="#444" stroke-width="1.3"/>
<path d="M4.5 2 V24 M1.5 5 L4.5 2 L7.5 5 M1.5 21 L4.5 24 L7.5 21" fill="none" stroke="#2b88d8" stroke-width="1.6"/></svg>
<div class="t" style="left:788.48px;top:145.34px;font-size:19.91px;line-height:19.91px;color:#444444;font-family:'Liberation Sans', sans-serif;transform:scaleX(0.9306);transform-origin:0 0;">Height:</div>
<div style="position:absolute;left:852px;top:137px;width:115px;height:35px;background:#ffffff;border:1px solid #c8c6c4;box-sizing:border-box;"></div>
<div class="t" style="left:855.26px;top:147.01px;font-size:18.90px;line-height:18.90px;color:#222222;font-family:'Liberation Sans', sans-serif;transform:scaleX(0.9787);transform-origin:0 0;">Automatic</div>
<svg style="position:absolute;left:952.0px;top:149.0px;" width="12" height="12" viewBox="0 0 12 12"><path d="M2 4.4 L6.0 8.4 L10 4.4" fill="none" stroke="#333" stroke-width="1.5"/></svg>
<svg style="position:absolute;left:760px;top:177px;" width="28" height="28" viewBox="0 0 28 28"><rect x="1.5" y="1.5" width="9" height="20" fill="#fafafa" stroke="#444" stroke-width="1.4"/><path d="M14 1.5 H24.5 V21" fill="none" stroke="#444" stroke-width="1.4"/></svg>
<div class="t" style="left:788.60px;top:180.76px;font-size:19.19px;line-height:19.19px;color:#444444;font-family:'Liberation Sans', sans-serif;transform:scaleX(0.9191);transform-origin:0 0;">Scale:</div>
<div style="position:absolute;left:862px;top:172px;width:92px;height:35px;background:#ffffff;border:1px solid #c8c6c4;box-sizing:border-box;"></div>
<div class="t" style="left:864.79px;top:181.01px;font-size:18.90px;line-height:18.90px;color:#222222;font-family:'Liberation Sans', sans-serif;transform:scaleX(0.8439);transform-origin:0 0;">100%</div>
<svg style="position:absolute;left:934px;top:175px;" width="14" height="10" viewBox="0 0 14 10"><path d="M2 7 L7 2 L12 7" fill="none" stroke="#333" stroke-width="1.4"/></svg>
<div style="position:absolute;left:978px;top:103px;width:1px;height:133px;background:#c8c6c4;"></div>
<div class="t" style="left:990.43px;top:114.01px;font-size:18.90px;line-height:18.90px;color:#444444;font-family:'Liberation Sans', sans-serif;transform:scaleX(0.9146);transform-origin:0 0;">Gridlines</div>
<div class="t" style="left:1080.34px;top:114.01px;font-size:18.90px;line-height:18.90px;color:#444444;font-family:'Liberation Sans', sans-serif;transform:scaleX(0.9433);transform-origin:0 0;">Headings</div>
<div style="position:absolute;left:1074px;top:112px;width:1px;height:124px;background:#c8c6c4;"></div>
<div style="position:absolute;left:995px;top:148px;width:20px;height:20px;background:#ffffff;border:1.5px solid #bdbdbd;box-sizing:border-box;"></div>
<svg style="position:absolute;left:995px;top:148px;" width="20" height="20" viewBox="0 0 20 20"><path d="M5 10 L8.5 13.5 L15 6.5" fill="none" stroke="#222" stroke-width="1.6"/></svg>
<div class="t" style="left:1022.93px;top:150.52px;font-size:18.17px;line-height:18.17px;color:#444444;font-family:'Liberation Sans', sans-serif;transform:scaleX(0.9277);transform-origin:0 0;">View</div>
<div style="position:absolute;left:995px;top:183px;width:20px;height:20px;background:#ffffff;border:1.5px solid #bdbdbd;box-sizing:border-box;"></div>
<div class="t" style="left:1021.48px;top:185.52px;font-size:18.17px;line-height:18.17px;color:#444444;font-family:'Liberation Sans', sans-serif;transform:scaleX(1.0214);transform-origin:0 0;">Print</div>
<div style="position:absolute;left:1085px;top:148px;width:20px;height:20px;background:#ffffff;border:1.5px solid #bdbdbd;box-sizing:border-box;"></div>
<svg style="position:absolute;left:1085px;top:148px;" width="20" height="20" viewBox="0 0 20 20"><path d="M5 10 L8.5 13.5 L15 6.5" fill="none" stroke="#222" stroke-width="1.6"/></svg>
<div class="t" style="left:1113.33px;top:150.52px;font-size:18.17px;line-height:18.17px;color:#444444;font-family:'Liberation Sans', sans-serif;transform:scaleX(0.9277);transform-origin:0 0;">View</div>
<div style="position:absolute;left:1085px;top:183px;width:20px;height:20px;background:#ffffff;border:1.5px solid #bdbdbd;box-sizing:border-box;"></div>
<div class="t" style="left:1111.88px;top:185.52px;font-size:18.17px;line-height:18.17px;color:#444444;font-family:'Liberation Sans', sans-serif;transform:scaleX(1.0214);transform-origin:0 0;">Print</div>
<svg style="position:absolute;left:1150px;top:221px;" width="16" height="16" viewBox="0 0 16 16"><path d="M2.5 8 V2.5 H8 M4 4 L13 13 M13 7 V13 H7" fill="none" stroke="#555" stroke-width="1.3"/></svg>
<div style="position:absolute;left:1170px;top:103px;width:1px;height:133px;background:#c8c6c4;"></div>
<svg style="position:absolute;left:1184px;top:104px;" width="30" height="30" viewBox="0 0 30 30"><rect x="11" y="11.5" width="14" height="14" fill="none" stroke="#444" stroke-width="1.6"/>
<rect x="2" y="2" width="17" height="17" fill="#fbd38b" stroke="#e17d13" stroke-width="1.6"/></svg>
<div class="t" style="left:1213.44px;top:111.03px;font-size:18.75px;line-height:18.75px;color:#444444;font-family:'Liberation Sans', sans-serif;transform:scaleX(0.9461);transform-origin:0 0;">Bring Forward</div>
<svg style="position:absolute;left:1338.0px;top:113.5px;" width="12" height="12" viewBox="0 0 12 12"><path d="M2 4.4 L6.0 8.4 L10 4.4" fill="none" stroke="#444444" stroke-width="1.5"/></svg>
<svg style="position:absolute;left:1184px;top:139px;" width="30" height="30" viewBox="0 0 30 30"><rect x="2" y="2" width="17" height="17" fill="#fbd38b" stroke="#e17d13" stroke-width="1.6"/>
<rect x="10" y="10" width="15" height="15" fill="#fafafa" stroke="#444" stroke-width="1.6"/></svg>
<div class="t" style="left:1214.12px;top:144.83px;font-size:18.75px;line-height:18.75px;color:#444444;font-family:'Liberation Sans', sans-serif;transform:scaleX(0.9121);transform-origin:0 0;">Send Backward</div>
<svg style="position:absolute;left:1347.0px;top:147.5px;" width="12" height="12" viewBox="0 0 12 12"><path d="M2 4.4 L6.0 8.4 L10 4.4" fill="none" stroke="#444444" stroke-width="1.5"/></svg>
<svg style="position:absolute;left:1184px;top:173px;" width="30" height="30" viewBox="0 0 30 30"><rect x="9" y="2" width="16" height="15" fill="#fbd38b" stroke="#e17d13" stroke-width="1.6"/>
<rect x="2" y="12" width="11" height="12" fill="#fafafa" stroke="#444" stroke-width="1.6"/>
<path d="M15 12 V25 L18 22 L20.5 26 L22.5 25 L20 21 H24 Z" fill="#444" stroke="#fafafa" stroke-width="0.6"/></svg>
<div class="t" style="left:1214.13px;top:178.93px;font-size:18.75px;line-height:18.75px;color:#444444;font-family:'Liberation Sans', sans-serif;transform:scaleX(0.9008);transform-origin:0 0;">Selection Pane</div>
<div class="t" style="left:1300.57px;top:221.68px;font-size:15.26px;line-height:15.26px;color:#444444;font-family:'Liberation Sans', sans-serif;transform:scaleX(1.0338);transform-origin:0 0;">Arrange</div>
<svg style="position:absolute;left:1370px;top:104px;" width="28" height="28" viewBox="0 0 28 28"><path d="M1.5 1 V25" stroke="#444" stroke-width="1.6"/>
<rect x="5" y="2" width="9" height="6" fill="none" stroke="#444" stroke-width="1.4"/>
<rect x="5" y="10.5" width="19" height="7" fill="none" stroke="#444" stroke-width="1.4"/>
<path d="M5 21.5 H14 M8.5 18.5 L5 21.5 L8.5 24.5" fill="none" stroke="#2b88d8" stroke-width="1.6"/></svg>
<div class="t" style="left:1399.66px;top:111.17px;font-size:18.46px;line-height:18.46px;color:#444444;font-family:'Liberation Sans', sans-serif;transform:scaleX(1.0047);transform-origin:0 0;">Align</div>
<svg style="position:absolute;left:1444.0px;top:113.0px;" width="12" height="12" viewBox="0 0 12 12"><path d="M2 4.4 L6.0 8.4 L10 4.4" fill="none" stroke="#444444" stroke-width="1.5"/></svg>
<svg style="position:absolute;left:1370px;top:139px;" width="28" height="28" viewBox="0 0 28 28"><g fill="#a6a6a6"><rect x="1" y="1.3" width="2.8" height="2.8"/><rect x="22" y="1.3" width="2.8" height="2.8"/><rect x="1" y="22.4" width="2.8" height="2.8"/><rect x="22" y="22.4" width="2.8" height="2.8"/></g>
<rect x="9.5" y="9.5" width="13.5" height="13.5" fill="#ececec" stroke="#a6a6a6" stroke-width="1.5"/>
<rect x="3.5" y="3" width="13" height="13" fill="none" stroke="#a6a6a6" stroke-width="1.5"/></svg>
<div class="t" style="left:1398.80px;top:145.07px;font-size:18.46px;line-height:18.46px;color:#aaaaaa;font-family:'Liberation Sans', sans-serif;transform:scaleX(0.9718);transform-origin:0 0;">Group</div>
<svg style="position:absolute;left:1453.0px;top:146.0px;" width="12" height="12" viewBox="0 0 12 12"><path d="M2 4.4 L6.0 8.4 L10 4.4" fill="none" stroke="#aaa" stroke-width="1.5"/></svg>
<svg style="position:absolute;left:1370px;top:173px;" width="28" height="24" viewBox="0 0 28 24"><path d="M1.5 21.5 L23.5 9 V21.5 Z" fill="#f0f0f0" stroke="#aaa" stroke-width="1.6"/>
<path d="M3 13 C0 8 3 3.5 11 4 M8 0.5 L11.5 4 L8 7.5" fill="none" stroke="#aaa" stroke-width="1.4"/></svg>
<div class="t" style="left:1398.55px;top:179.07px;font-size:18.46px;line-height:18.46px;color:#aaaaaa;font-family:'Liberation Sans', sans-serif;transform:scaleX(0.9606);transform-origin:0 0;">Rotate</div>
<svg style="position:absolute;left:1454.0px;top:181.0px;" width="12" height="12" viewBox="0 0 12 12"><path d="M2 4.4 L6.0 8.4 L10 4.4" fill="none" stroke="#aaa" stroke-width="1.5"/></svg>
<div style="position:absolute;left:1488px;top:103px;width:1px;height:133px;background:#c8c6c4;"></div>
<svg style="position:absolute;left:1545px;top:225px;" width="18" height="12" viewBox="0 0 18 12"><path d="M2 9.5 L9 2.5 L16 9.5" fill="none" stroke="#444" stroke-width="1.5"/></svg>
<div class="t" style="left:422.35px;top:221.88px;font-size:15.26px;line-height:15.26px;color:#444444;font-family:'Liberation Sans', sans-serif;">Page Setup</div>
<div style="position:absolute;left:437px;top:175px;width:707px;height:756px;overflow:hidden;"><div style="position:absolute;left:9px;top:10px;width:682px;height:727px;box-shadow:3px 4px 16px 2px rgba(0,0,0,0.32);"></div></div>
<div style="position:absolute;left:446px;top:185px;width:682px;height:727px;background:#f0f0f0;border:1px solid #8c8c8c;box-sizing:border-box;"></div>
<div style="position:absolute;left:447px;top:186px;width:680px;height:44px;background:#ffffff;"></div>
<div class="t" style="left:457.52px;top:200.01px;font-size:18.90px;line-height:18.90px;color:#000000;font-family:'Liberation Sans', sans-serif;transform:scaleX(0.9143);transform-origin:0 0;">Create New Theme Colors</div>
<div class="t" style="left:1017.86px;top:197.96px;font-size:21.08px;line-height:21.08px;color:#000000;font-family:'Liberation Sans', sans-serif;transform:scaleX(0.7444);transform-origin:0 0;">?</div>
<svg style="position:absolute;left:1084px;top:199px;" width="18" height="18" viewBox="0 0 18 18"><path d="M1 1 L16 16 M16 1 L1 16" stroke="#111" stroke-width="1.2"/></svg>
<div style="position:absolute;left:456px;top:241px;width:662px;height:618px;background:#ffffff;border:1px solid #dadada;box-sizing:border-box;"></div>
<div style="position:absolute;left:469px;top:264px;width:312px;height:545px;background:none;border:1px solid #dcdcdc;box-sizing:border-box;"></div>
<div style="position:absolute;left:479px;top:258px;width:100px;height:12px;background:#ffffff;"></div>
<div class="t" style="left:482.26px;top:257.97px;font-size:16.57px;line-height:16.57px;color:#000000;font-family:'Liberation Sans', sans-serif;transform:scaleX(0.9245);transform-origin:0 0;">Theme colors</div>
<div style="position:absolute;left:795px;top:264px;width:310px;height:296px;background:none;border:1px solid #dcdcdc;box-sizing:border-box;"></div>
<div style="position:absolute;left:805px;top:258px;width:58px;height:12px;background:#ffffff;"></div>
<div class="t" style="left:807.70px;top:257.97px;font-size:16.57px;line-height:16.57px;color:#000000;font-family:'Liberation Sans', sans-serif;transform:scaleX(0.9361);transform-origin:0 0;">Sample</div>
<div class="t" style="left:492.75px;top:303.47px;font-size:16.57px;line-height:16.57px;color:#000000;font-family:'Liberation Sans', sans-serif;transform:scaleX(0.9371);transform-origin:0 0;text-underline-offset:2px;"><u>T</u>ext/Background - Dark 1</div>
<div style="position:absolute;left:688px;top:293px;width:69px;height:35px;background:#e1e1e1;border:1px solid #adadad;box-sizing:border-box;"></div>
<div style="position:absolute;left:694px;top:299px;width:32px;height:23px;background:#ffffff;border:2px solid #7f9dbf;box-sizing:border-box;"></div>
<div style="position:absolute;left:698px;top:303px;width:24px;height:15px;background:#000000;"></div>
<svg style="position:absolute;left:735px;top:306px;" width="13" height="8" viewBox="0 0 13 8"><path d="M0.5 0.5 H12 L6.25 6.5 Z" fill="#000"/></svg>
<div class="t" style="left:492.75px;top:345.47px;font-size:16.57px;line-height:16.57px;color:#000000;font-family:'Liberation Sans', sans-serif;transform:scaleX(0.9446);transform-origin:0 0;text-underline-offset:2px;">Text/<u>B</u>ackground - Light 1</div>
<div style="position:absolute;left:688px;top:335px;width:69px;height:35px;background:#e1e1e1;border:1px solid #adadad;box-sizing:border-box;"></div>
<div style="position:absolute;left:694px;top:341px;width:32px;height:23px;background:#ffffff;border:2px solid #7f9dbf;box-sizing:border-box;"></div>
<div style="position:absolute;left:698px;top:345px;width:24px;height:15px;background:#ffffff;"></div>
<svg style="position:absolute;left:735px;top:348px;" width="13" height="8" viewBox="0 0 13 8"><path d="M0.5 0.5 H12 L6.25 6.5 Z" fill="#000"/></svg>
<div class="t" style="left:492.75px;top:387.47px;font-size:16.57px;line-height:16.57px;color:#000000;font-family:'Liberation Sans', sans-serif;transform:scaleX(0.9420);transform-origin:0 0;text-underline-offset:2px;">Text/Background - <u>D</u>ark 2</div>
<div style="position:absolute;left:688px;top:377px;width:69px;height:35px;background:#e1e1e1;border:1px solid #adadad;box-sizing:border-box;"></div>
<div style="position:absolute;left:694px;top:383px;width:32px;height:23px;background:#ffffff;border:2px solid #7f9dbf;box-sizing:border-box;"></div>
<div style="position:absolute;left:698px;top:387px;width:24px;height:15px;background:#44546a;"></div>
<svg style="position:absolute;left:735px;top:390px;" width="13" height="8" viewBox="0 0 13 8"><path d="M0.5 0.5 H12 L6.25 6.5 Z" fill="#000"/></svg>
<div class="t" style="left:492.75px;top:429.47px;font-size:16.57px;line-height:16.57px;color:#000000;font-family:'Liberation Sans', sans-serif;transform:scaleX(0.9447);transform-origin:0 0;text-underline-offset:2px;">Text/Background - <u>L</u>ight 2</div>
<div style="position:absolute;left:688px;top:419px;width:69px;height:35px;background:#e1e1e1;border:1px solid #adadad;box-sizing:border-box;"></div>
<div style="position:absolute;left:694px;top:425px;width:32px;height:23px;background:#ffffff;border:2px solid #7f9dbf;box-sizing:border-box;"></div>
<div style="position:absolute;left:698px;top:429px;width:24px;height:15px;background:#e7e6e6;"></div>
<svg style="position:absolute;left:735px;top:432px;" width="13" height="8" viewBox="0 0 13 8"><path d="M0.5 0.5 H12 L6.25 6.5 Z" fill="#000"/></svg>
<div class="t" style="left:493.07px;top:471.47px;font-size:16.57px;line-height:16.57px;color:#000000;font-family:'Liberation Sans', sans-serif;transform:scaleX(0.9209);transform-origin:0 0;text-underline-offset:2px;">Accent <u>1</u></div>
<div style="position:absolute;left:688px;top:461px;width:69px;height:35px;background:#e1e1e1;border:1px solid #adadad;box-sizing:border-box;"></div>
<div style="position:absolute;left:694px;top:467px;width:32px;height:23px;background:#ffffff;border:2px solid #7f9dbf;box-sizing:border-box;"></div>
<div style="position:absolute;left:698px;top:471px;width:24px;height:15px;background:#4472c4;"></div>
<svg style="position:absolute;left:735px;top:474px;" width="13" height="8" viewBox="0 0 13 8"><path d="M0.5 0.5 H12 L6.25 6.5 Z" fill="#000"/></svg>
<div class="t" style="left:493.07px;top:513.47px;font-size:16.57px;line-height:16.57px;color:#000000;font-family:'Liberation Sans', sans-serif;transform:scaleX(0.9213);transform-origin:0 0;text-underline-offset:2px;">Accent <u>2</u></div>
<div style="position:absolute;left:688px;top:503px;width:69px;height:35px;background:#e1e1e1;border:1px solid #adadad;box-sizing:border-box;"></div>
<div style="position:absolute;left:694px;top:509px;width:32px;height:23px;background:#ffffff;border:2px solid #7f9dbf;box-sizing:border-box;"></div>
<div style="position:absolute;left:698px;top:513px;width:24px;height:15px;background:#ed7d31;"></div>
<svg style="position:absolute;left:735px;top:516px;" width="13" height="8" viewBox="0 0 13 8"><path d="M0.5 0.5 H12 L6.25 6.5 Z" fill="#000"/></svg>
<div class="t" style="left:493.07px;top:555.47px;font-size:16.57px;line-height:16.57px;color:#000000;font-family:'Liberation Sans', sans-serif;transform:scaleX(0.9197);transform-origin:0 0;text-underline-offset:2px;">Accent <u>3</u></div>
<div style="position:absolute;left:688px;top:545px;width:69px;height:35px;background:#e1e1e1;border:1px solid #adadad;box-sizing:border-box;"></div>
<div style="position:absolute;left:694px;top:551px;width:32px;height:23px;background:#ffffff;border:2px solid #7f9dbf;box-sizing:border-box;"></div>
<div style="position:absolute;left:698px;top:555px;width:24px;height:15px;background:#a5a5a5;"></div>
<svg style="position:absolute;left:735px;top:558px;" width="13" height="8" viewBox="0 0 13 8"><path d="M0.5 0.5 H12 L6.25 6.5 Z" fill="#000"/></svg>
<div class="t" style="left:493.07px;top:597.47px;font-size:16.57px;line-height:16.57px;color:#000000;font-family:'Liberation Sans', sans-serif;transform:scaleX(0.9162);transform-origin:0 0;text-underline-offset:2px;">Accent <u>4</u></div>
<div style="position:absolute;left:688px;top:587px;width:69px;height:35px;background:#e1e1e1;border:1px solid #adadad;box-sizing:border-box;"></div>
<div style="position:absolute;left:694px;top:593px;width:32px;height:23px;background:#ffffff;border:2px solid #7f9dbf;box-sizing:border-box;"></div>
<div style="position:absolute;left:698px;top:597px;width:24px;height:15px;background:#ffc000;"></div>
<svg style="position:absolute;left:735px;top:600px;" width="13" height="8" viewBox="0 0 13 8"><path d="M0.5 0.5 H12 L6.25 6.5 Z" fill="#000"/></svg>
<div class="t" style="left:493.07px;top:639.47px;font-size:16.57px;line-height:16.57px;color:#000000;font-family:'Liberation Sans', sans-serif;transform:scaleX(0.9193);transform-origin:0 0;text-underline-offset:2px;">Accent <u>5</u></div>
<div style="position:absolute;left:688px;top:629px;width:69px;height:35px;background:#e1e1e1;border:1px solid #adadad;box-sizing:border-box;"></div>
<div style="position:absolute;left:694px;top:635px;width:32px;height:23px;background:#ffffff;border:2px solid #7f9dbf;box-sizing:border-box;"></div>
<div style="position:absolute;left:698px;top:639px;width:24px;height:15px;background:#5b9bd5;"></div>
<svg style="position:absolute;left:735px;top:642px;" width="13" height="8" viewBox="0 0 13 8"><path d="M0.5 0.5 H12 L6.25 6.5 Z" fill="#000"/></svg>
<div class="t" style="left:493.07px;top:681.47px;font-size:16.57px;line-height:16.57px;color:#000000;font-family:'Liberation Sans', sans-serif;transform:scaleX(0.9197);transform-origin:0 0;text-underline-offset:2px;">Accent <u>6</u></div>
<div style="position:absolute;left:688px;top:671px;width:69px;height:35px;background:#e1e1e1;border:1px solid #adadad;box-sizing:border-box;"></div>
<div style="position:absolute;left:694px;top:677px;width:32px;height:23px;background:#ffffff;border:2px solid #7f9dbf;box-sizing:border-box;"></div>
<div style="position:absolute;left:698px;top:681px;width:24px;height:15px;background:#70ad47;"></div>
<svg style="position:absolute;left:735px;top:684px;" width="13" height="8" viewBox="0 0 13 8"><path d="M0.5 0.5 H12 L6.25 6.5 Z" fill="#000"/></svg>
<div class="t" style="left:491.76px;top:723.47px;font-size:16.57px;line-height:16.57px;color:#000000;font-family:'Liberation Sans', sans-serif;transform:scaleX(0.9863);transform-origin:0 0;text-underline-offset:2px;"><u>H</u>yperlink</div>
<div style="position:absolute;left:688px;top:713px;width:69px;height:35px;background:#e1e1e1;border:1px solid #adadad;box-sizing:border-box;"></div>
<div style="position:absolute;left:694px;top:719px;width:32px;height:23px;background:#ffffff;border:2px solid #7f9dbf;box-sizing:border-box;"></div>
<div style="position:absolute;left:698px;top:723px;width:24px;height:15px;background:#0563c1;"></div>
<svg style="position:absolute;left:735px;top:726px;" width="13" height="8" viewBox="0 0 13 8"><path d="M0.5 0.5 H12 L6.25 6.5 Z" fill="#000"/></svg>
<div class="t" style="left:491.79px;top:765.47px;font-size:16.57px;line-height:16.57px;color:#000000;font-family:'Liberation Sans', sans-serif;transform:scaleX(0.9644);transform-origin:0 0;text-underline-offset:2px;"><u>F</u>ollowed Hyperlink</div>
<div style="position:absolute;left:688px;top:755px;width:69px;height:35px;background:#e1e1e1;border:1px solid #adadad;box-sizing:border-box;"></div>
<div style="position:absolute;left:694px;top:761px;width:32px;height:23px;background:#ffffff;border:2px solid #7f9dbf;box-sizing:border-box;"></div>
<div style="position:absolute;left:698px;top:765px;width:24px;height:15px;background:#954f72;"></div>
<svg style="position:absolute;left:735px;top:768px;" width="13" height="8" viewBox="0 0 13 8"><path d="M0.5 0.5 H12 L6.25 6.5 Z" fill="#000"/></svg>
<div class="t" style="left:476.98px;top:830.37px;font-size:15.99px;line-height:15.99px;color:#000000;font-family:'Liberation Sans', sans-serif;transform:scaleX(1.0086);transform-origin:0 0;"><u>N</u>ame:</div>
<div style="position:absolute;left:538px;top:822px;width:573px;height:30px;background:#ffffff;border:1px solid #a9a9a9;box-sizing:border-box;"></div>
<div style="position:absolute;left:542px;top:826px;width:67px;height:21px;background:#99c9ef;"></div>
<div class="t" style="left:542.01px;top:830.12px;font-size:16.28px;line-height:16.28px;color:#000000;font-family:'Liberation Sans', sans-serif;transform:scaleX(0.9509);transform-origin:0 0;">Custom 1</div>
<div style="position:absolute;left:457px;top:865px;width:111px;height:34px;background:#e1e1e1;border:1px solid #adadad;box-sizing:border-box;"></div>
<div class="t" style="left:492.49px;top:875.30px;font-size:16.42px;line-height:16.42px;color:#a0a0a0;font-family:'Liberation Sans', sans-serif;transform:scaleX(0.9001);transform-origin:0 0;"><u>R</u>eset</div>
<div style="position:absolute;left:879px;top:865px;width:111px;height:34px;background:#e1e1e1;border:2px solid #0078d7;box-sizing:border-box;"></div>
<div class="t" style="left:917.83px;top:875.30px;font-size:16.42px;line-height:16.42px;color:#000000;font-family:'Liberation Sans', sans-serif;transform:scaleX(0.8982);transform-origin:0 0;"><u>S</u>ave</div>
<div style="position:absolute;left:1006px;top:865px;width:111px;height:34px;background:#e1e1e1;border:1px solid #adadad;box-sizing:border-box;"></div>
<div class="t" style="left:1037.84px;top:875.30px;font-size:16.42px;line-height:16.42px;color:#000000;font-family:'Liberation Sans', sans-serif;transform:scaleX(0.9107);transform-origin:0 0;">Cancel</div>
<div style="position:absolute;left:820px;top:294px;width:131px;height:246px;background:#44546a;"></div>
<div style="position:absolute;left:951px;top:293px;width:131px;height:247px;background:#e7e6e6;"></div>
<div style="position:absolute;left:818px;top:540px;width:264px;height:1px;background:#e2e2e2;"></div>
<div class="t" style="left:863.77px;top:315.77px;font-size:20.35px;line-height:20.35px;color:#ffffff;font-family:'Liberation Sans', sans-serif;font-weight:bold;transform:scaleX(0.9912);transform-origin:0 0;">Text</div>
<div class="t" style="left:995.78px;top:315.77px;font-size:20.35px;line-height:20.35px;color:#000000;font-family:'Liberation Sans', sans-serif;font-weight:bold;transform:scaleX(0.9670);transform-origin:0 0;">Text</div>
<svg style="position:absolute;left:850px;top:345px;" width="70" height="55" viewBox="0 0 70 55"><defs><linearGradient id="sg850" x1="0" y1="0" x2="1" y2="0"><stop offset="0" stop-color="#ffffff"/><stop offset="1" stop-color="#4472c4"/></linearGradient></defs>
<rect x="23.5" y="1.5" width="41" height="33" fill="url(#sg850)" stroke="#4472c4" stroke-width="1.2"/>
<circle cx="18" cy="33.5" r="17" fill="#ffffff" stroke="#6f8fd0" stroke-width="1.3"/>
<path d="M11 33 q1 -2 2 0 q1 2 2 0 q1 -2 2 0 q1 2 2 0 q1 -2 2 0 q1 2 2 0" fill="none" stroke="#4472c4" stroke-width="0.8"/></svg>
<svg style="position:absolute;left:980.5px;top:345px;" width="70" height="55" viewBox="0 0 70 55"><defs><linearGradient id="sg980.5" x1="0" y1="0" x2="1" y2="0"><stop offset="0" stop-color="#ffffff"/><stop offset="1" stop-color="#4472c4"/></linearGradient></defs>
<rect x="23.5" y="1.5" width="41" height="33" fill="url(#sg980.5)" stroke="#4472c4" stroke-width="1.2"/>
<circle cx="18" cy="33.5" r="17" fill="#ffffff" stroke="#4472c4" stroke-width="1.3"/>
<path d="M11 33 q1 -2 2 0 q1 2 2 0 q1 -2 2 0 q1 2 2 0 q1 -2 2 0 q1 2 2 0" fill="none" stroke="#4472c4" stroke-width="0.8"/></svg>
<svg style="position:absolute;left:831px;top:405px;" width="110" height="56" viewBox="0 0 110 56"><rect x="7.5" y="36.6" width="15.2" height="16.9" fill="#4472c4" stroke="#ffffff" stroke-width="1.6"/><rect x="22.7" y="21.4" width="15.2" height="32.1" fill="#ed7d31" stroke="#ffffff" stroke-width="1.6"/><rect x="37.9" y="6.2" width="15.2" height="47.3" fill="#a5a5a5" stroke="#ffffff" stroke-width="1.6"/><rect x="53.1" y="17.3" width="15.2" height="36.2" fill="#ffc000" stroke="#ffffff" stroke-width="1.6"/><rect x="68.3" y="26.0" width="15.2" height="27.5" fill="#5b9bd5" stroke="#ffffff" stroke-width="1.6"/><rect x="83.5" y="39.3" width="15.2" height="14.2" fill="#70ad47" stroke="#ffffff" stroke-width="1.6"/><rect x="0" y="53" width="109" height="1.5" fill="#ffffff"/></svg>
<svg style="position:absolute;left:961px;top:405px;" width="110" height="56" viewBox="0 0 110 56"><rect x="7.5" y="36.6" width="15.2" height="16.9" fill="#4472c4" stroke="#3a3a3a" stroke-width="1.6"/><rect x="22.7" y="21.4" width="15.2" height="32.1" fill="#ed7d31" stroke="#3a3a3a" stroke-width="1.6"/><rect x="37.9" y="6.2" width="15.2" height="47.3" fill="#a5a5a5" stroke="#3a3a3a" stroke-width="1.6"/><rect x="53.1" y="17.3" width="15.2" height="36.2" fill="#ffc000" stroke="#3a3a3a" stroke-width="1.6"/><rect x="68.3" y="26.0" width="15.2" height="27.5" fill="#5b9bd5" stroke="#3a3a3a" stroke-width="1.6"/><rect x="83.5" y="39.3" width="15.2" height="14.2" fill="#70ad47" stroke="#3a3a3a" stroke-width="1.6"/><rect x="0" y="53" width="109" height="1.5" fill="#3a3a3a"/></svg>
<div class="t" style="left:850.47px;top:485.35px;font-size:16.72px;line-height:16.72px;color:#0563c1;font-family:'Liberation Sans', sans-serif;transform:scaleX(0.9719);transform-origin:0 0;text-decoration:underline;">Hyperlink</div>
<div class="t" style="left:850.47px;top:508.65px;font-size:16.72px;line-height:16.72px;color:#954f72;font-family:'Liberation Sans', sans-serif;transform:scaleX(0.9719);transform-origin:0 0;text-decoration:underline;">Hyperlink</div>
<div class="t" style="left:980.67px;top:485.35px;font-size:16.72px;line-height:16.72px;color:#0563c1;font-family:'Liberation Sans', sans-serif;transform:scaleX(0.9675);transform-origin:0 0;text-decoration:underline;">Hyperlink</div>
<div class="t" style="left:980.67px;top:508.65px;font-size:16.72px;line-height:16.72px;color:#954f72;font-family:'Liberation Sans', sans-serif;transform:scaleX(0.9675);transform-origin:0 0;text-decoration:underline;">Hyperlink</div>
<div style="position:absolute;left:432px;top:170px;width:717px;height:766px;box-sizing:border-box;border:5px solid #000;border-radius:6px;"></div>
<svg style="position:absolute;left:1373px;top:729px;" width="22" height="30" viewBox="0 0 22 30"><path d="M1.5 1.5 V22 L6.5 17.5 L10.5 26.5 L14 25 L10 16 H16.5 Z" fill="#ffffff" stroke="#1a1a1a" stroke-width="1.2" stroke-linejoin="round"/></svg>
</body></html>
